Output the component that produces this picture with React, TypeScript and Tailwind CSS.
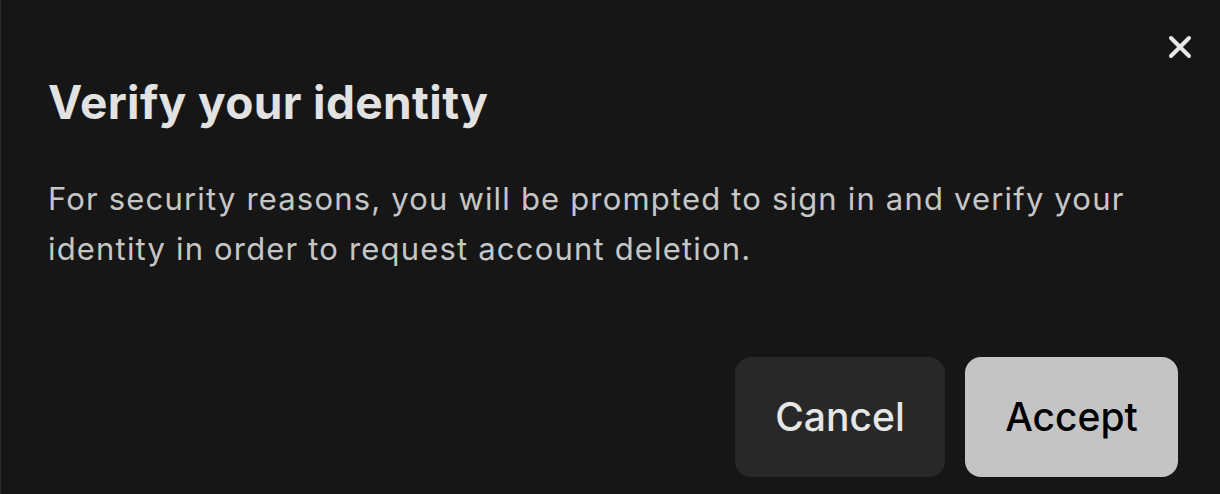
export default function App() {
  return (
    <div className="h-[494px] w-[1220px] overflow-hidden border-l border-[#2c2c2c] bg-[#161616] font-['Inter',sans-serif]">
      <div className="relative flex h-full flex-col pl-[47px] pr-[42px]">
        <button className="absolute right-[27px] top-[34px] text-[#e8e8e8]" aria-label="Close">
          <svg width="26" height="26" viewBox="0 0 26 26" fill="none">
            <path d="M4 4L22 22M22 4L4 22" stroke="currentColor" strokeWidth="4" strokeLinecap="round" />
          </svg>
        </button>
        <h1 className="mt-[74px] text-[46px] font-bold leading-[56px] tracking-[0.008em] text-[#e2e2e2]">
          Verify your identity
        </h1>
        <p className="mt-[44px] text-[31px] leading-[50px] tracking-[0.038em] text-[#c6c6c6]">
          For security reasons, you will be prompted to sign in and verify your
          <br />
          identity in order to request account deletion.
        </p>
        <div className="mt-auto mb-[17px] flex justify-end gap-5">
          <button className="h-[120px] w-[210px] rounded-[16px] bg-[#282828] text-[39px] font-medium text-[#e6e6e6]">
            Cancel
          </button>
          <button className="h-[120px] w-[213px] rounded-[16px] bg-[#c4c4c4] text-[39px] font-medium text-black">
            Accept
          </button>
        </div>
      </div>
    </div>
  );
}
